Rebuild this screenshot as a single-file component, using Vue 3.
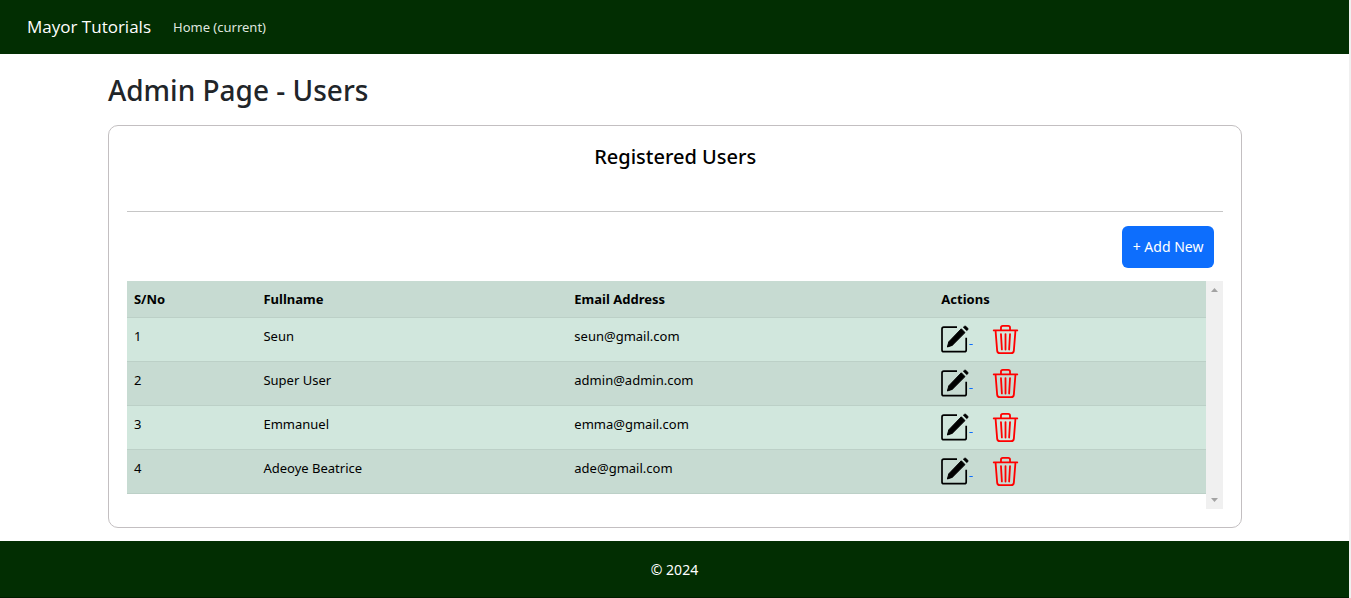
<script setup>
const users = [
  { id: 1, name: 'Seun', email: 'seun@gmail.com' },
  { id: 2, name: 'Super User', email: 'admin@admin.com' },
  { id: 3, name: 'Emmanuel', email: 'emma@gmail.com' },
  { id: 4, name: 'Adeoye Beatrice', email: 'ade@gmail.com' },
]
</script>

<template>
  <div class="page">
    <nav class="navbar">
      <a class="brand" href="#">Mayor Tutorials</a>
      <a class="nav-link" href="#">Home (current)</a>
    </nav>

    <main class="content">
      <h1>Admin Page - Users</h1>
      <section class="card">
        <h2>Registered Users</h2>
        <hr />
        <div class="toolbar">
          <button type="button" class="add">+ Add New</button>
        </div>
        <div class="table-area">
          <table>
            <thead>
              <tr>
                <th class="col-no">S/No</th>
                <th class="col-name">Fullname</th>
                <th class="col-email">Email Address</th>
                <th>Actions</th>
              </tr>
            </thead>
            <tbody>
              <tr v-for="user in users" :key="user.id">
                <td>{{ user.id }}</td>
                <td>{{ user.name }}</td>
                <td>{{ user.email }}</td>
                <td>
                  <div class="actions">
                    <a class="edit" href="#" :aria-label="'Edit ' + user.name">
                      <svg width="28" height="29" viewBox="0 0 28 29">
                        <path d="M16 2.2H2.8Q1 2.2 1 4V24.9Q1 26.7 2.8 26.7H23.4Q25.2 26.7 25.2 24.9V12.8" fill="none" stroke="#000" stroke-width="1.7" />
                        <path d="M20.3 3.8L24 7.6L11.2 20.4L6.4 22L7.8 16.8Z" fill="#000" stroke="#000" stroke-width="1" stroke-linejoin="round" />
                        <path d="M22.2 2.2L23.4 1.2Q24.2 .6 25 1.3L26.9 3.2Q27.6 4 26.9 4.8L25.7 5.8Z" fill="#000" stroke="#000" stroke-width=".5" />
                      </svg>
                      <span class="link-gap">&nbsp;</span>
                    </a>
                    <a class="remove" href="#" :aria-label="'Delete ' + user.name">
                      <svg width="29" height="29" viewBox="0 0 16 16" fill="#f00">
                        <path d="M6.5 1h3a.5.5 0 0 1 .5.5v1H6v-1a.5.5 0 0 1 .5-.5M11 2.5v-1A1.5 1.5 0 0 0 9.5 0h-3A1.5 1.5 0 0 0 5 1.5v1H1.5a.5.5 0 0 0 0 1h.538l.853 10.66A2 2 0 0 0 4.885 16h6.23a2 2 0 0 0 1.994-1.84l.853-10.66h.538a.5.5 0 0 0 0-1zm1.958 1-.846 10.58a1 1 0 0 1-.997.92h-6.23a1 1 0 0 1-.997-.92L3.042 3.5zm-7.487 1a.5.5 0 0 1 .528.47l.5 8.5a.5.5 0 0 1-.998.06L5 5.03a.5.5 0 0 1 .47-.53Zm5.058 0a.5.5 0 0 1 .47.53l-.5 8.5a.5.5 0 1 1-.998-.06l.5-8.5a.5.5 0 0 1 .528-.47M8 4.5a.5.5 0 0 1 .5.5v8.5a.5.5 0 0 1-1 0V5a.5.5 0 0 1 .5-.5" />
                      </svg>
                    </a>
                  </div>
                </td>
              </tr>
            </tbody>
          </table>
          <div class="rail" aria-hidden="true">
            <svg width="7" height="4" viewBox="0 0 7 4"><path d="M0 4L3.5 0L7 4Z" fill="#a3a3a3" /></svg>
            <svg width="7" height="4" viewBox="0 0 7 4"><path d="M0 0L3.5 4L7 0Z" fill="#a3a3a3" /></svg>
          </div>
        </div>
      </section>
    </main>

    <footer>© 2024</footer>
  </div>
</template>

<style>
body {
  margin: 0;
  background: #fff;
}
</style>

<style scoped>
.page {
  display: flex;
  flex-direction: column;
  box-sizing: border-box;
  min-height: 100vh;
  border-right: 2px solid #f0f0f0;
  font-family: "Noto Sans", "Open Sans", sans-serif;
  font-size: 13px;
  line-height: 22px;
  color: #000;
}
.navbar {
  display: flex;
  align-items: center;
  gap: 22px;
  height: 54px;
  padding: 0 27px;
  background: #022e02;
}
.navbar a {
  text-decoration: none;
}
.navbar .brand {
  font-family: "Open Sans", "Noto Sans", sans-serif;
  font-size: 17px;
  color: #fff;
}
.nav-link {
  color: #dfe5df;
}
.content {
  padding: 17px 7.9% 13px 8%;
}
h1 {
  margin: 0 0 16px;
  font-size: 28px;
  line-height: 38px;
  font-weight: 500;
  color: #212529;
}
.card {
  padding: 17px 18px 18px;
  border: 1px solid #c3bfc1;
  border-radius: 10px;
}
h2 {
  margin: 0;
  font-size: 20px;
  line-height: 28px;
  font-weight: 500;
  text-align: center;
}
hr {
  margin: 40px 0 14px;
  border: 0;
  border-top: 1px solid #c6c6c6;
}
.toolbar {
  display: flex;
  justify-content: flex-end;
  padding: 0 9px 13px;
}
.add {
  height: 42px;
  padding: 0 11px;
  border: 0;
  border-radius: 6px;
  background: #0d6efd;
  color: #fff;
  font: inherit;
  font-size: 14px;
}
.table-area {
  display: flex;
  min-height: 228px;
}
table {
  flex: 1;
  align-self: flex-start;
  width: 100%;
  table-layout: fixed;
  border-collapse: separate;
  border-spacing: 0;
}
th,
td {
  box-sizing: border-box;
  padding: 7px;
  border-bottom: 1px solid #bcd0c7;
  text-align: left;
  vertical-align: top;
}
th {
  background: #c7dbd2;
  font-weight: 700;
}
td {
  height: 44px;
  background: #d1e7dd;
}
tbody tr:nth-child(even) td {
  background: #c7dbd2;
}
.col-no {
  width: 12%;
}
.col-name {
  width: 28.8%;
}
.col-email {
  width: 34%;
}
.actions {
  display: flex;
  align-items: center;
  gap: 18px;
}
.actions a {
  display: flex;
  align-items: center;
  text-decoration: none;
}
.actions svg {
  display: block;
}
.link-gap {
  padding-bottom: 3px;
  color: #0d6efd;
  text-decoration: underline;
}
.rail {
  display: flex;
  flex: none;
  flex-direction: column;
  align-items: center;
  justify-content: space-between;
  box-sizing: border-box;
  width: 17px;
  padding: 7px 0;
  background: #f0f0f0;
}
footer {
  flex: 1;
  display: flex;
  align-items: center;
  justify-content: center;
  box-sizing: border-box;
  min-height: 57px;
  padding-top: 2px;
  border-bottom: 1px solid #001d00;
  background: #022e02;
  color: #fff;
  font-size: 14px;
}
</style>
